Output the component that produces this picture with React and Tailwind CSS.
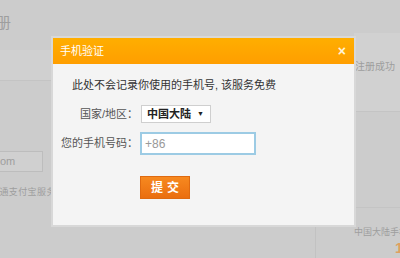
export default function App() {
  const font = { fontFamily: '"Liberation Sans", "Noto Sans CJK SC", sans-serif' };
  return (
    <div className="relative w-[400px] h-[258px] overflow-hidden bg-[#cccccc] text-[#9e9e9e]" style={font}>
      {/* dimmed page behind the dialog */}
      <div className="flex h-full">
        <div className="w-[53px] flex flex-col">
          <div className="h-[50px] pt-[14px] text-[15px] leading-[18px] -ml-[19px] whitespace-nowrap">注册</div>
          <div className="h-[31px] bg-[#d0d0d0] border-b border-[#c4c4c4]"></div>
          <div className="mt-[70px] -ml-[14px] w-[57px] h-[21px] border border-[#bdbdbd] bg-[#d0d0d0] text-[11px] leading-[19px] pl-[13px]">
            om
          </div>
          <div className="mt-[14px] -ml-[10px] whitespace-nowrap text-[9px] leading-[13px] tracking-[0.4px]">普通支付宝服务</div>
        </div>
        <div className="flex-1 flex flex-col">
          <div className="mt-auto h-[32px] mr-[38px] border-r border-[#c2c2c2]"></div>
        </div>
        <div className="w-[46px] flex flex-col">
          <div className="mt-[33px] h-[79px] bg-[#d1d1d1] border-b border-[#c4c4c4] pt-[27px] pl-[1px] text-[10px] leading-[13px] whitespace-nowrap">
            注册成功
          </div>
          <div className="h-[96px] border-b border-[#c4c4c4]"></div>
          <div className="pt-[18px] text-[9px] leading-[12px] whitespace-nowrap">中国大陆手机</div>
          <div className="pt-[2px] pl-[41px] text-[15px] leading-[16px] font-bold text-[#e0a060]">1</div>
        </div>
      </div>

      {/* dialog */}
      <div className="absolute left-[51px] top-[36px] w-[305px] border-2 border-[#d8d8d8]">
        <div className="h-[26px] flex items-center justify-between bg-gradient-to-b from-[#ffae00] to-[#ff9e00] pl-[7px] pr-[8px]">
          <span className="text-[11px] text-white">手机验证</span>
          <span className="text-[14px] font-bold text-[#fff3d6] leading-none">×</span>
        </div>
        <div className="bg-[#f4f4f4] pt-[14px] pb-[26px]">
          <div className="pl-[19px] text-[11px] leading-[14px] text-[#333]">此处不会记录你使用的手机号, 该服务免费</div>
          <div className="mt-[13px] flex items-center">
            <div className="w-[85px] text-right text-[11px] text-[#555]">国家/地区：</div>
            <div className="ml-[3px] w-[70px] h-[18px] bg-white border border-[#cfcfcf] flex items-center justify-between pl-[5px] pr-[6px]">
              <span className="text-[11px] font-bold text-[#222]">中国大陆</span>
              <span className="text-[7px] text-[#222]">▼</span>
            </div>
          </div>
          <div className="mt-[9px] flex items-center">
            <div className="w-[85px] text-right text-[11px] text-[#555]">您的手机号码：</div>
            <div className="ml-[2px] w-[116px] h-[23px] bg-white border-2 border-[#9ccbe4] flex items-center pl-[3px] text-[12px] text-[#999]">
              +86
            </div>
          </div>
          <div className="mt-[21px] ml-[87px] w-[50px] h-[23px] flex items-center justify-center bg-gradient-to-b from-[#f7891f] to-[#ea6e0f] border border-[#df6a10] text-white text-[12px] font-bold tracking-[4px] pl-[4px]">
            提交
          </div>
        </div>
      </div>
    </div>
  );
}
